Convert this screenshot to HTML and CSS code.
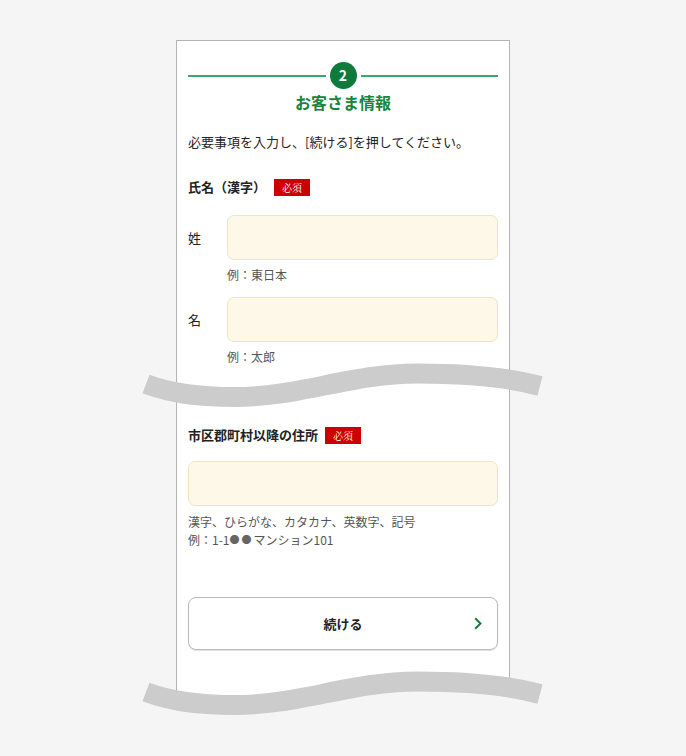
FILE: index.html
```html
<!DOCTYPE html>
<html lang="ja">
<head>
<meta charset="utf-8">
<title>お客さま情報</title>
<link rel="stylesheet" href="styles.css">
</head>
<body>
<div class="page">
  <div class="card">
    <div class="step">
      <span class="step-line"></span>
      <span class="step-num">2</span>
      <span class="step-line"></span>
    </div>
    <h1 class="title">お客さま情報</h1>
    <p class="lead">必要事項を入力し、[続ける]を押してください。</p>

    <div class="group-head">
      <span class="group-label">氏名（漢字）</span>
      <span class="badge">必須</span>
    </div>

    <div class="field field-first">
      <span class="field-label">姓</span>
      <span class="input"></span>
    </div>
    <p class="hint hint-indent">例：東日本</p>

    <div class="field field-next">
      <span class="field-label">名</span>
      <span class="input"></span>
    </div>
    <p class="hint hint-indent">例：太郎</p>

    <div class="group-head group-head-addr">
      <span class="group-label">市区郡町村以降の住所</span>
      <span class="badge">必須</span>
    </div>
    <span class="input input-full"></span>
    <p class="hint hint-block">漢字、ひらがな、カタカナ、英数字、記号<br>例：1-1<span class="dots">●●</span>マンション101</p>

    <div class="button">
      <span class="button-spacer"></span>
      <span class="button-text">続ける</span>
      <svg class="chevron" width="8" height="13" viewBox="0 0 8 13"><path d="M1.2 1.2 L6.5 6.5 L1.2 11.8" fill="none" stroke="#1a7a3a" stroke-width="2"/></svg>
    </div>
  </div>

  <svg class="waves" width="686" height="756" viewBox="0 0 686 756">
    <path d="M146,384 C175,395 205,397 235,397 C300,397 350,373.5 418,373.5 C472,373.5 510,378 540,386" fill="none" stroke="#cccccc" stroke-width="20"/>
    <g transform="translate(0,308)">
      <path d="M146,384 C175,395 205,397 235,397 C300,397 350,373.5 418,373.5 C472,373.5 510,378 540,386 L540,460 L146,460 Z" fill="#f5f5f5"/>
      <path d="M146,384 C175,395 205,397 235,397 C300,397 350,373.5 418,373.5 C472,373.5 510,378 540,386" fill="none" stroke="#cccccc" stroke-width="20"/>
    </g>
  </svg>
</div>
</body>
</html>
```

FILE: styles.css
```css
* {
  box-sizing: border-box;
}

html, body {
  margin: 0;
  padding: 0;
  background: #f5f5f5;
}

body {
  font-family: "Noto Sans CJK JP", "Noto Sans", sans-serif;
  color: #222;
}

.page {
  position: relative;
  width: 686px;
  height: 756px;
  overflow: hidden;
  padding-top: 40px;
}

.card {
  margin-left: 176px;
  width: 334px;
  height: 690px;
  background: #fff;
  border: 1px solid #b4b4b4;
  border-bottom: none;
  padding: 21px 11px 0 11px;
}

.step {
  display: flex;
  align-items: center;
  gap: 4px;
}

.step-line {
  display: block;
  flex: 1;
  height: 2px;
  background: #3aa866;
}

.step-num {
  width: 27px;
  height: 27px;
  border-radius: 50%;
  background: #0e7a3c;
  color: #fff;
  font-weight: 700;
  font-size: 14px;
  line-height: 27px;
  text-align: center;
}

.title {
  margin: 1px 0 0 0;
  font-size: 16px;
  line-height: 24px;
  font-weight: 700;
  color: #15863a;
  text-align: center;
}

.lead {
  margin: 18px 0 0 0;
  font-size: 13px;
  line-height: 20px;
}

.group-head {
  margin-top: 25px;
  display: flex;
  align-items: center;
  height: 20px;
}

.group-head-addr {
  margin-top: 59px;
}

.group-label {
  font-size: 13px;
  font-weight: 700;
  line-height: 20px;
}

.badge {
  margin-left: 8px;
  width: 36px;
  height: 17px;
  background: #cc0000;
  color: #fff;
  font-family: "Noto Serif CJK JP", "Noto Sans CJK JP", serif;
  font-size: 10px;
  line-height: 17px;
  text-align: center;
}

.group-head-addr .badge {
  margin-left: 7px;
}

.field {
  display: flex;
  align-items: center;
}

.field-first {
  margin-top: 18px;
}

.field-next {
  margin-top: 13px;
}

.field-label {
  width: 39px;
  font-size: 13px;
  line-height: 20px;
  flex: none;
}

.input {
  display: block;
  flex: 1;
  height: 45px;
  background: #fef8e8;
  border: 1px solid #efe4c6;
  border-radius: 7px;
}

.input-full {
  margin-top: 16px;
  width: 100%;
}

.hint {
  margin: 6px 0 0 0;
  font-size: 12px;
  line-height: 18px;
  color: #555;
}

.hint-indent {
  padding-left: 39px;
}

.hint-block {
  margin-top: 7px;
}

.dots {
  font-size: 10px;
  line-height: 0;
  letter-spacing: 2px;
  vertical-align: 1px;
  color: #666;
}

.button {
  margin-top: 48px;
  height: 53px;
  border: 1px solid #b8b8b8;
  border-radius: 8px;
  box-shadow: 0 1px 1px rgba(0, 0, 0, 0.12);
  display: grid;
  grid-template-columns: 1fr auto 1fr;
  align-items: center;
}

.button-text {
  font-size: 13px;
  font-weight: 700;
  line-height: 20px;
}

.chevron {
  justify-self: end;
  margin-right: 15px;
}

.waves {
  position: absolute;
  left: 0;
  top: 0;
  pointer-events: none;
}
```
